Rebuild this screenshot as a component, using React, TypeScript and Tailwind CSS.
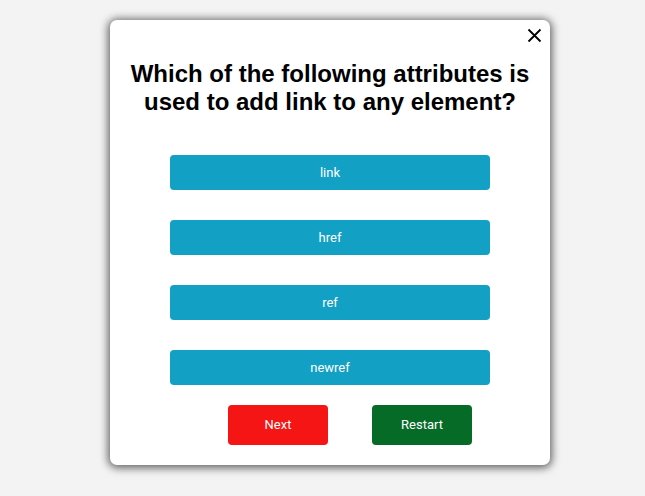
import React from "react";

export default function App() {
  const options = ["link", "href", "ref", "newref"];
  const roboto = { fontFamily: 'Roboto, "Noto Sans", sans-serif' };
  return (
    <div className="min-h-[496px] w-full bg-[#f3f3f3] pt-[20px] pl-[110px]">
      <div className="relative w-[440px] h-[445px] bg-white rounded-[7px] shadow-[0_1px_8px_2px_rgba(0,0,0,0.6)] flex flex-col items-center pt-[40px]">
        <button className="absolute right-[8px] top-[7px] w-[16px] h-[16px] flex items-center justify-center">
          <svg width="15" height="15" viewBox="0 0 15 15">
            <path d="M1.5 1.5 L13.5 13.5 M13.5 1.5 L1.5 13.5" stroke="#000" strokeWidth="1.8" strokeLinecap="butt" />
          </svg>
        </button>
        <h1 className="text-center font-bold text-[24px] leading-[28px] text-black" style={{ fontFamily: '"Liberation Sans", Arial, sans-serif' }}>
          Which of the following attributes is<br />used to add link to any element?
        </h1>
        <div className="mt-[39px] flex flex-col gap-[30px]">
          {options.map((o) => (
            <button
              key={o}
              className="w-[320px] h-[35px] rounded-[4px] bg-[#12a0c5] text-white text-[13px] font-normal flex items-center justify-center"
              style={roboto}
            >
              {o}
            </button>
          ))}
        </div>
        <div className="mt-[20px] ml-[40px] flex gap-[44px]">
          <button className="w-[100px] h-[40px] rounded-[4px] bg-[#f51515] text-white text-[13px] font-normal" style={roboto}>
            Next
          </button>
          <button className="w-[100px] h-[40px] rounded-[4px] bg-[#066b27] text-white text-[13px] font-normal" style={roboto}>
            Restart
          </button>
        </div>
      </div>
    </div>
  );
}
